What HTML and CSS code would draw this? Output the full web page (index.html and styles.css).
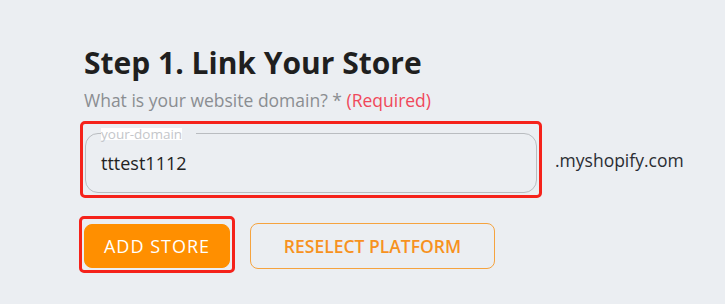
FILE: index.html
```html
<!DOCTYPE html>
<html>
<head>
<meta charset="utf-8">
<link rel="stylesheet" href="styles.css">
</head>
<body>
<div class="page">
  <h1 class="title">Step 1. Link Your Store</h1>
  <p class="question">What is your website domain? * <span class="required">(Required)</span></p>
  <div class="domain-row">
    <div class="highlight highlight-input">
      <fieldset class="field">
        <legend class="legend">your-domain</legend>
        <div class="value">tttest1112</div>
      </fieldset>
    </div>
    <span class="suffix">.myshopify.com</span>
  </div>
  <div class="actions">
    <div class="highlight highlight-btn">
      <button class="btn btn-primary">ADD STORE</button>
    </div>
    <button class="btn btn-outline">RESELECT PLATFORM</button>
  </div>
</div>
</body>
</html>
```

FILE: styles.css
```css
html, body {
  margin: 0;
  padding: 0;
  background: #ebeef2;
  font-family: "Open Sans", "Noto Sans", sans-serif;
}
.page {
  padding: 43px 0 0 84px;
  width: 640px;
}
.title {
  margin: 0;
  font-size: 30px;
  font-weight: 700;
  line-height: 40px;
  color: #1f1f1f;
}
.question {
  margin: 5px 0 0;
  font-size: 17.5px;
  line-height: 24px;
  color: #8a8d91;
}
.required {
  color: #f0485a;
}
.domain-row {
  display: flex;
  align-items: center;
  margin-top: 9px;
  margin-left: -4px;
}
.highlight {
  border: 3px solid #f5221b;
  border-radius: 5px;
}
.highlight-input {
  width: 454px;
  height: 71px;
  padding: 0 0 0 2px;
  box-sizing: content-box;
}
.field {
  margin: 3px 0 0;
  width: 452px;
  height: 66px;
  box-sizing: border-box;
  border: 1px solid #b9bcc0;
  border-radius: 13px;
  padding: 0 0 0 15px;
}
.legend {
  font-size: 13.5px;
  line-height: 12px;
  color: #c4c6ca;
  background: #ffffff;
  padding: 1px 14px 0 0;
  background-clip: content-box;
}
.value {
  font-size: 18px;
  line-height: 24px;
  color: #222;
  margin-top: 11px;
}
.suffix {
  margin-left: 13px;
  font-size: 17.5px;
  color: #2a2d33;
}
.actions {
  display: flex;
  align-items: flex-start;
  gap: 15px;
  margin-top: 18px;
  margin-left: -5px;
}
.highlight-btn {
  padding: 5px 2px 2px 2px;
}
.btn {
  font-family: "Open Sans", "Noto Sans", sans-serif;
  cursor: pointer;
  border-radius: 8px;
  padding: 0;
}
.btn-primary {
  display: block;
  width: 146px;
  height: 44px;
  background: #ff8f00;
  border: 1px solid #ff8f00;
  color: #fff;
  font-size: 18px;
  letter-spacing: 1px;
  font-weight: 400;
}
.btn-outline {
  width: 245px;
  height: 46px;
  margin-top: 7px;
  background: transparent;
  border: 1px solid #f5a33f;
  color: #f7921e;
  font-weight: 600;
  font-size: 17.5px;
}
```
